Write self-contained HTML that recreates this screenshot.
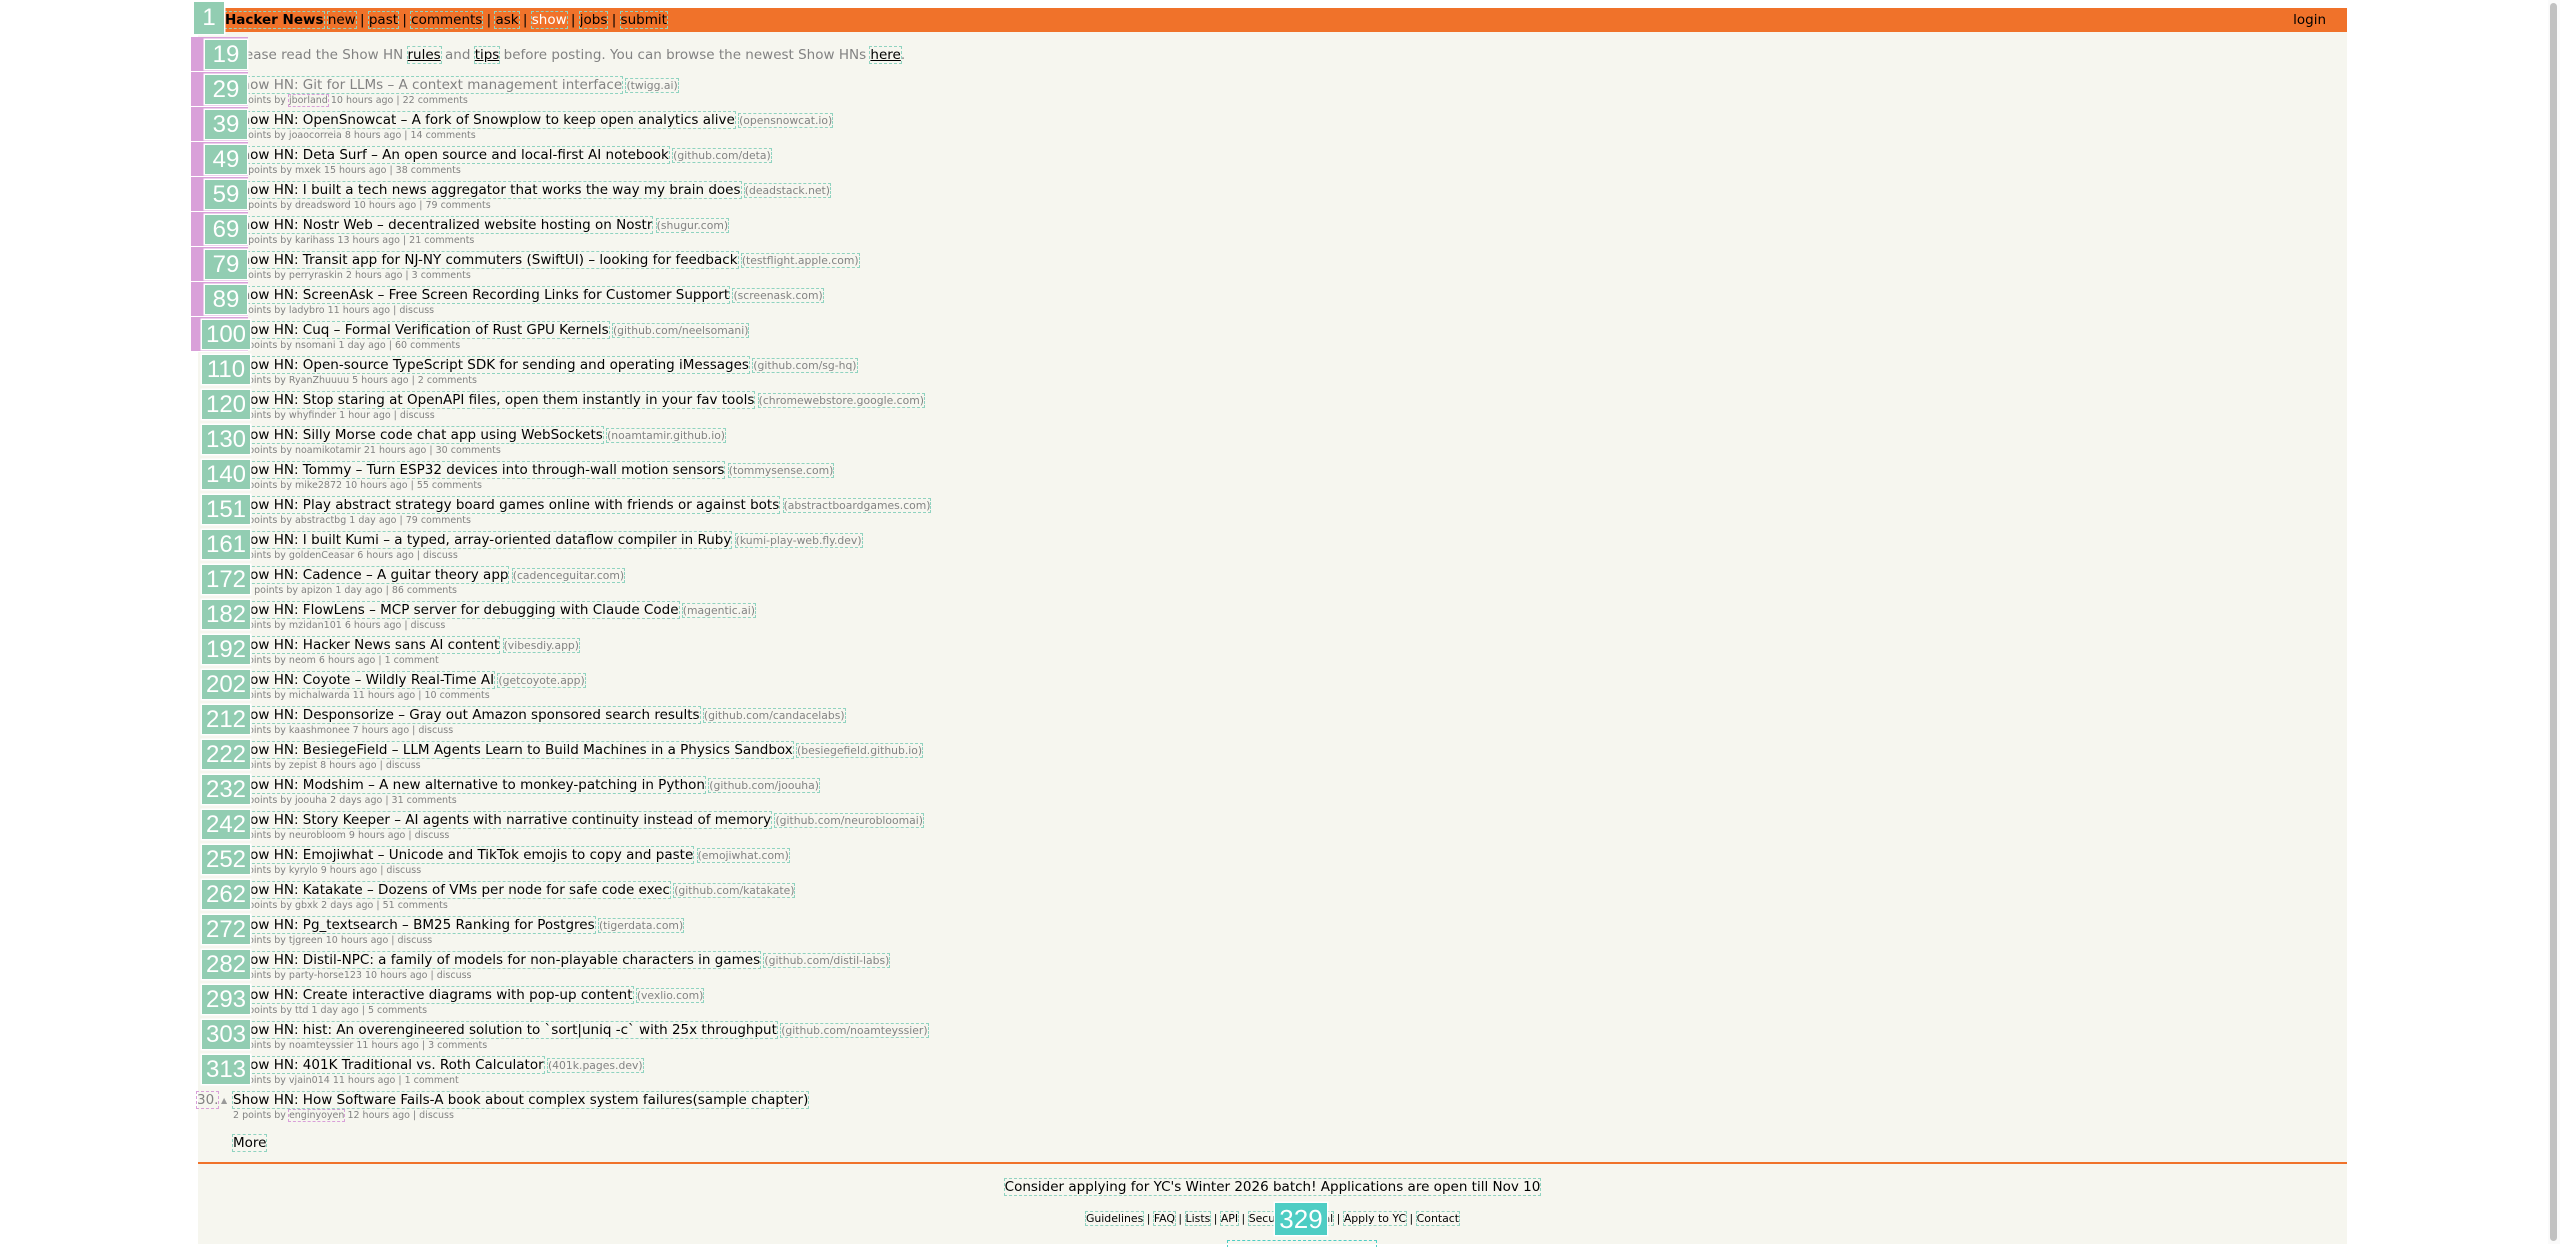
<!DOCTYPE html>
<html><head><meta charset="utf-8"><style>
*{margin:0;padding:0;box-sizing:border-box}
html,body{width:2560px;height:1244px;overflow:hidden;background:#fff;font-family:"DejaVu Sans",Verdana,sans-serif}
#page{position:absolute;left:198px;top:8px;width:2149px;height:1236px;background:#f6f6ef}
#hdr{position:absolute;left:198px;top:8px;width:2149px;height:24px;background:#f0722a;font-size:13.5px;line-height:24px;color:#000}
#hdr .nav{position:absolute;left:27px;top:0;white-space:nowrap}
#hdr b{font-weight:bold}
#hdr .w{color:#fff}
#hdr .login{position:absolute;right:21px;top:0}
a{color:inherit;text-decoration:none}
.d{outline:1px dashed #8fd3c0;outline-offset:0}
.p{outline:1px dashed #d9a0d9}
.intro{position:absolute;left:233px;top:46px;font-size:13.5px;color:#828282;line-height:19px;white-space:nowrap}
.intro u{color:#000}
.row{position:absolute;left:0;width:2300px;height:35px}
.t{position:absolute;left:233px;top:0;font-size:13.5px;line-height:19px;white-space:nowrap;color:#000}
.t .s{font-size:10.8px;color:#828282}
.st{position:absolute;left:233px;top:17px;font-size:9.5px;line-height:15px;color:#828282;white-space:nowrap}
.pk{position:absolute;left:191px;width:57px;height:35px;background:#d9a0d9;border-bottom:1px solid #fff}
.g{position:absolute;height:29px;background:#92cdb2;color:#fff;font-family:"Liberation Sans",Arial,sans-serif;font-size:24px;line-height:29px;text-align:center;box-shadow:0 0 0 1.5px #fff}
.g2{left:205px;width:42px}
.g3{left:202px;width:48px}
.vis{color:#828282}
#more{position:absolute;left:233px;top:1134px;font-size:13.5px;line-height:19px}
#line{position:absolute;left:198px;top:1162px;width:2149px;height:2px;background:#f0722a}
#yc{position:absolute;left:0;width:2545px;top:1178px;text-align:center;font-size:13.5px;line-height:19px}
#links{position:absolute;left:0;width:2545px;top:1211px;text-align:center;font-size:10.9px;line-height:15px}
#b329{position:absolute;left:1275px;top:1203px;width:52px;height:32px;background:#4ecdc4;color:#fff;font-family:"Liberation Sans",Arial,sans-serif;font-size:26px;line-height:32px;text-align:center;box-shadow:0 0 0 1.5px #fff}
#sbox{position:absolute;left:1228px;top:1241px;width:148px;height:6px;outline:1px dashed #4ecdc4}
#sb{position:absolute;left:2548px;top:0;width:12px;height:1244px;background:#fafafa}
#sb div{position:absolute;left:2px;top:3px;width:7px;height:1238px;background:#c1c1c1;border-radius:4px}
</style></head><body>
<div id="page"></div>
<div id="hdr"><div class="nav"><b class="d">Hacker News</b> <a class="d">new</a> | <a class="d">past</a> | <a class="d">comments</a> | <a class="d">ask</a> | <a class="d w">show</a> | <a class="d">jobs</a> | <a class="d">submit</a></div><a class="login">login</a></div>
<div class="g" style="left:194px;top:2px;width:30px;height:32px;line-height:32px">1</div>

<div class="pk" style="top:37px"></div>
<div class="intro">Please read the Show HN <u class="d">rules</u> and <u class="d">tips</u> before posting. You can browse the newest Show HNs <u class="d">here</u>.</div>
<div class="g g2" style="top:40px">19</div>

<div id="rows" style="position:absolute;left:0;top:76px">
<div class="pk" style="top:-4px"></div><div class="pk" style="top:31px"></div><div class="pk" style="top:66px"></div><div class="pk" style="top:101px"></div><div class="pk" style="top:136px"></div><div class="pk" style="top:171px"></div><div class="pk" style="top:206px"></div><div class="pk" style="top:241px"></div>

<div class="row" style="top:0px"><div class="t"><a class="d vis">Show HN: Git for LLMs – A context management interface</a> <span class="s d">(twigg.ai)</span></div><div class="st">9 points by <span class="p">jborland</span> 10 hours ago | 22 comments</div><div class="g g2" style="top:-1px">29</div></div>
<div class="row" style="top:35px"><div class="t"><a class="d">Show HN: OpenSnowcat – A fork of Snowplow to keep open analytics alive</a> <span class="s d">(opensnowcat.io)</span></div><div class="st">5 points by joaocorreia 8 hours ago | 14 comments</div><div class="g g2" style="top:-1px">39</div></div>
<div class="row" style="top:70px"><div class="t"><a class="d">Show HN: Deta Surf – An open source and local-first AI notebook</a> <span class="s d">(github.com/deta)</span></div><div class="st">98 points by mxek 15 hours ago | 38 comments</div><div class="g g2" style="top:-1px">49</div></div>
<div class="row" style="top:105px"><div class="t"><a class="d">Show HN: I built a tech news aggregator that works the way my brain does</a> <span class="s d">(deadstack.net)</span></div><div class="st">91 points by dreadsword 10 hours ago | 79 comments</div><div class="g g2" style="top:-1px">59</div></div>
<div class="row" style="top:140px"><div class="t"><a class="d">Show HN: Nostr Web – decentralized website hosting on Nostr</a> <span class="s d">(shugur.com)</span></div><div class="st">52 points by karihass 13 hours ago | 21 comments</div><div class="g g2" style="top:-1px">69</div></div>
<div class="row" style="top:175px"><div class="t"><a class="d">Show HN: Transit app for NJ-NY commuters (SwiftUI) – looking for feedback</a> <span class="s d">(testflight.apple.com)</span></div><div class="st">5 points by perryraskin 2 hours ago | 3 comments</div><div class="g g2" style="top:-1px">79</div></div>
<div class="row" style="top:210px"><div class="t"><a class="d">Show HN: ScreenAsk – Free Screen Recording Links for Customer Support</a> <span class="s d">(screenask.com)</span></div><div class="st">4 points by ladybro 11 hours ago | discuss</div><div class="g g2" style="top:-1px">89</div></div>
<div class="row" style="top:245px"><div class="t"><a class="d">Show HN: Cuq – Formal Verification of Rust GPU Kernels</a> <span class="s d">(github.com/neelsomani)</span></div><div class="st">81 points by nsomani 1 day ago | 60 comments</div><div class="g g3" style="top:-1px">100</div></div>
<div class="row" style="top:280px"><div class="t"><a class="d">Show HN: Open-source TypeScript SDK for sending and operating iMessages</a> <span class="s d">(github.com/sg-hq)</span></div><div class="st">7 points by RyanZhuuuu 5 hours ago | 2 comments</div><div class="g g3" style="top:-1px">110</div></div>
<div class="row" style="top:315px"><div class="t"><a class="d">Show HN: Stop staring at OpenAPI files, open them instantly in your fav tools</a> <span class="s d">(chromewebstore.google.com)</span></div><div class="st">3 points by whyfinder 1 hour ago | discuss</div><div class="g g3" style="top:-1px">120</div></div>
<div class="row" style="top:350px"><div class="t"><a class="d">Show HN: Silly Morse code chat app using WebSockets</a> <span class="s d">(noamtamir.github.io)</span></div><div class="st">41 points by noamikotamir 21 hours ago | 30 comments</div><div class="g g3" style="top:-1px">130</div></div>
<div class="row" style="top:385px"><div class="t"><a class="d">Show HN: Tommy – Turn ESP32 devices into through-wall motion sensors</a> <span class="s d">(tommysense.com)</span></div><div class="st">66 points by mike2872 10 hours ago | 55 comments</div><div class="g g3" style="top:-1px">140</div></div>
<div class="row" style="top:420px"><div class="t"><a class="d">Show HN: Play abstract strategy board games online with friends or against bots</a> <span class="s d">(abstractboardgames.com)</span></div><div class="st">99 points by abstractbg 1 day ago | 79 comments</div><div class="g g3" style="top:-1px">151</div></div>
<div class="row" style="top:455px"><div class="t"><a class="d">Show HN: I built Kumi – a typed, array-oriented dataflow compiler in Ruby</a> <span class="s d">(kumi-play-web.fly.dev)</span></div><div class="st">8 points by goldenCeasar 6 hours ago | discuss</div><div class="g g3" style="top:-1px">161</div></div>
<div class="row" style="top:490px"><div class="t"><a class="d">Show HN: Cadence – A guitar theory app</a> <span class="s d">(cadenceguitar.com)</span></div><div class="st">172 points by apizon 1 day ago | 86 comments</div><div class="g g3" style="top:-1px">172</div></div>
<div class="row" style="top:525px"><div class="t"><a class="d">Show HN: FlowLens – MCP server for debugging with Claude Code</a> <span class="s d">(magentic.ai)</span></div><div class="st">4 points by mzidan101 6 hours ago | discuss</div><div class="g g3" style="top:-1px">182</div></div>
<div class="row" style="top:560px"><div class="t"><a class="d">Show HN: Hacker News sans AI content</a> <span class="s d">(vibesdiy.app)</span></div><div class="st">6 points by neom 6 hours ago | 1 comment</div><div class="g g3" style="top:-1px">192</div></div>
<div class="row" style="top:595px"><div class="t"><a class="d">Show HN: Coyote – Wildly Real-Time AI</a> <span class="s d">(getcoyote.app)</span></div><div class="st">9 points by michalwarda 11 hours ago | 10 comments</div><div class="g g3" style="top:-1px">202</div></div>
<div class="row" style="top:630px"><div class="t"><a class="d">Show HN: Desponsorize – Gray out Amazon sponsored search results</a> <span class="s d">(github.com/candacelabs)</span></div><div class="st">5 points by kaashmonee 7 hours ago | discuss</div><div class="g g3" style="top:-1px">212</div></div>
<div class="row" style="top:665px"><div class="t"><a class="d">Show HN: BesiegeField – LLM Agents Learn to Build Machines in a Physics Sandbox</a> <span class="s d">(besiegefield.github.io)</span></div><div class="st">4 points by zepist 8 hours ago | discuss</div><div class="g g3" style="top:-1px">222</div></div>
<div class="row" style="top:700px"><div class="t"><a class="d">Show HN: Modshim – A new alternative to monkey-patching in Python</a> <span class="s d">(github.com/joouha)</span></div><div class="st">94 points by joouha 2 days ago | 31 comments</div><div class="g g3" style="top:-1px">232</div></div>
<div class="row" style="top:735px"><div class="t"><a class="d">Show HN: Story Keeper – AI agents with narrative continuity instead of memory</a> <span class="s d">(github.com/neurobloomai)</span></div><div class="st">3 points by neurobloom 9 hours ago | discuss</div><div class="g g3" style="top:-1px">242</div></div>
<div class="row" style="top:770px"><div class="t"><a class="d">Show HN: Emojiwhat – Unicode and TikTok emojis to copy and paste</a> <span class="s d">(emojiwhat.com)</span></div><div class="st">3 points by kyrylo 9 hours ago | discuss</div><div class="g g3" style="top:-1px">252</div></div>
<div class="row" style="top:805px"><div class="t"><a class="d">Show HN: Katakate – Dozens of VMs per node for safe code exec</a> <span class="s d">(github.com/katakate)</span></div><div class="st">99 points by gbxk 2 days ago | 51 comments</div><div class="g g3" style="top:-1px">262</div></div>
<div class="row" style="top:840px"><div class="t"><a class="d">Show HN: Pg_textsearch – BM25 Ranking for Postgres</a> <span class="s d">(tigerdata.com)</span></div><div class="st">4 points by tjgreen 10 hours ago | discuss</div><div class="g g3" style="top:-1px">272</div></div>
<div class="row" style="top:875px"><div class="t"><a class="d">Show HN: Distil-NPC: a family of models for non-playable characters in games</a> <span class="s d">(github.com/distil-labs)</span></div><div class="st">4 points by party-horse123 10 hours ago | discuss</div><div class="g g3" style="top:-1px">282</div></div>
<div class="row" style="top:910px"><div class="t"><a class="d">Show HN: Create interactive diagrams with pop-up content</a> <span class="s d">(vexlio.com)</span></div><div class="st">23 points by ttd 1 day ago | 5 comments</div><div class="g g3" style="top:-1px">293</div></div>
<div class="row" style="top:945px"><div class="t"><a class="d">Show HN: hist: An overengineered solution to `sort|uniq -c` with 25x throughput</a> <span class="s d">(github.com/noamteyssier)</span></div><div class="st">6 points by noamteyssier 11 hours ago | 3 comments</div><div class="g g3" style="top:-1px">303</div></div>
<div class="row" style="top:980px"><div class="t"><a class="d">Show HN: 401K Traditional vs. Roth Calculator</a> <span class="s d">(401k.pages.dev)</span></div><div class="st">5 points by vjain014 11 hours ago | 1 comment</div><div class="g g3" style="top:-1px">313</div></div>
<div class="row" style="top:1015px"><div style="position:absolute;left:197px;top:0;font-size:13.5px;line-height:19px;color:#828282"><span class="p">30.</span></div><div style="position:absolute;left:221px;top:0;font-size:8px;line-height:19px;color:#9a9a9a">▲</div><div class="t"><a class="d">Show HN: How Software Fails-A book about complex system failures(sample chapter)</a></div><div class="st">2 points by <span class="p">enginyoyen</span> 12 hours ago | discuss</div></div>
</div>

<div id="more"><a class="d">More</a></div>
<div id="line"></div>
<div id="yc"><span class="d">Consider applying for YC's Winter 2026 batch! Applications are open till Nov 10</span></div>
<div id="links"><a class="d">Guidelines</a> | <a class="d">FAQ</a> | <a class="d">Lists</a> | <a class="d">API</a> | <a class="d">Security</a> | <a class="d">Legal</a> | <a class="d">Apply to YC</a> | <a class="d">Contact</a></div>
<div id="b329">329</div>
<div id="sbox"></div>
<div id="sb"><div></div></div>
</body></html>
